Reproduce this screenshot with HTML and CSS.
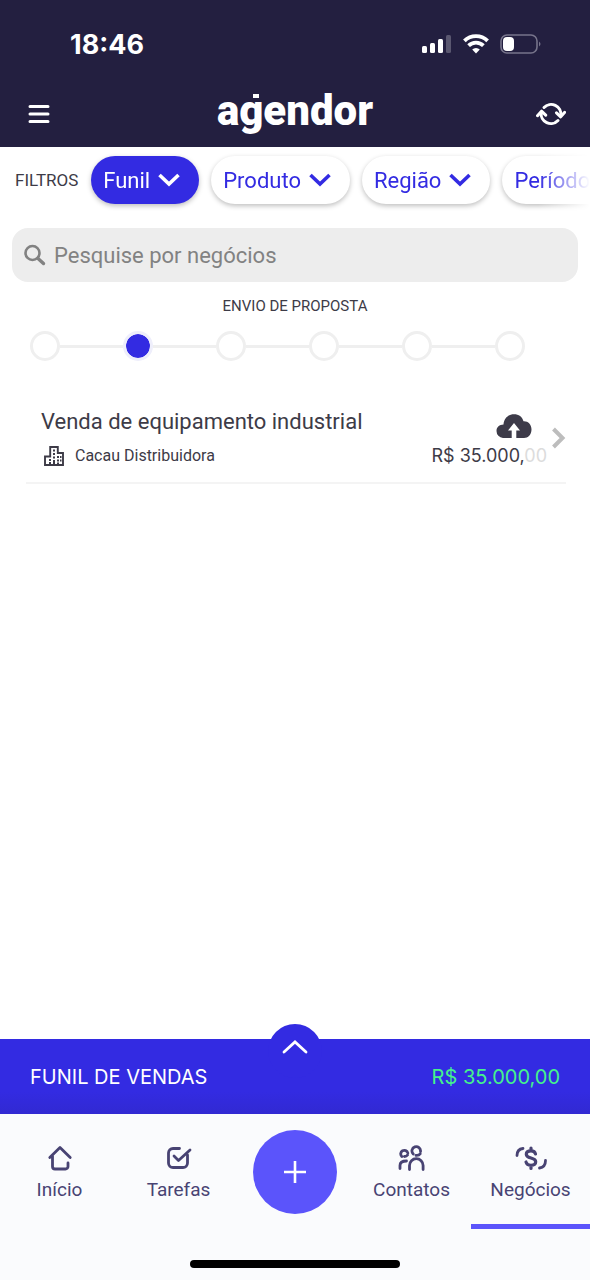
FILE: index.html
```html
<!DOCTYPE html>
<html lang="pt-BR">
<head>
<meta charset="utf-8">
<meta name="viewport" content="width=device-width, initial-scale=1">
<title>Agendor</title>
<link rel="stylesheet" href="styles.css">
</head>
<body>
<div class="app">
  <header class="header">
    <div class="status">
      <span class="time">18:46</span>
      <div class="indicators">
        <svg width="30" height="20" viewBox="0 0 30 20" fill="#fff"><rect x="0" y="12" width="5" height="7" rx="1.5"/><rect x="8" y="9" width="5" height="10" rx="1.5"/><rect x="16" y="5" width="5" height="14" rx="1.5"/><rect x="24" y="1" width="5" height="18" rx="1.5" opacity=".25"/></svg>
        <svg width="26" height="20" viewBox="0 0 26 20" fill="none" stroke="#fff" stroke-width="3.8"><path d="M1.400 6.800a16.500 16.500 0 0 1 23.200 0"/><path d="M5.600 11.600a10.500 10.500 0 0 1 14.800 0"/><path d="M13 19.400l-3.800-3.800a5.400 5.400 0 0 1 7.600 0z" fill="#fff" stroke="none"/></svg>
        <svg width="42" height="20" viewBox="0 0 42 20"><rect x="1" y="1" width="36" height="18" rx="6" fill="none" stroke="#77748b" stroke-width="1.6"/><rect x="3" y="3" width="11" height="14" rx="4" fill="#fff"/><path d="M39 7.500q3 2.500 0 5z" fill="#77748b"/></svg>
      </div>
    </div>
    <div class="topbar">
      <button class="icon-btn" aria-label="Menu"><svg width="22" height="20" viewBox="0 0 22 20" stroke="#fff" stroke-width="3" stroke-linecap="round"><path d="M2 2.500h18M2 10h18M2 17.500h18"/></svg></button>
      <h1 class="logo">agendor</h1>
      <button class="icon-btn" aria-label="Sincronizar"><svg width="30" height="24" viewBox="0 0 30 24" fill="none" stroke="#fff" stroke-width="3" stroke-linecap="round" stroke-linejoin="round"><path d="M8 5.500A9.800 9.800 0 0 1 24.800 13.500"/><path d="M20.500 10.800l4.200 4 4-4.500"/><path d="M22 18.500A9.800 9.800 0 0 1 5.200 10.500"/><path d="M1.500 13.700l4-4.500 4.200 4"/></svg></button>
    </div>
  </header>

  <main class="content">
    <div class="filters">
      <span class="filters-label">FILTROS</span>
      <div class="chips">
        <button class="chip chip-active">Funil <svg class="caret" width="22" height="14" viewBox="0 0 22 14"><path d="M1.500 2l9.500 9 9.500-9"/></svg></button>
        <button class="chip">Produto <svg class="caret" width="22" height="14" viewBox="0 0 22 14"><path d="M1.500 2l9.500 9 9.500-9"/></svg></button>
        <button class="chip">Região <svg class="caret" width="22" height="14" viewBox="0 0 22 14"><path d="M1.500 2l9.500 9 9.500-9"/></svg></button>
        <button class="chip">Período <svg class="caret" width="22" height="14" viewBox="0 0 22 14"><path d="M1.500 2l9.500 9 9.500-9"/></svg></button>
      </div>
    </div>

    <label class="search">
      <svg width="22" height="22" viewBox="0 0 22 22" fill="none" stroke="#828282" stroke-linecap="round"><circle cx="8.500" cy="9" r="7" stroke-width="2.600"/><path d="M14 14.500l5.500 5" stroke-width="3.400"/></svg>
      <input class="search-input" type="text" placeholder="Pesquise por negócios" aria-label="Pesquise por negócios">
    </label>

    <h2 class="stage-name">ENVIO DE PROPOSTA</h2>
    <div class="stages">
      <button class="stage" aria-label="Etapa 1"></button><span class="stage-line"></span>
      <button class="stage stage-active" aria-label="Etapa 2"></button><span class="stage-line"></span>
      <button class="stage" aria-label="Etapa 3"></button><span class="stage-line"></span>
      <button class="stage" aria-label="Etapa 4"></button><span class="stage-line"></span>
      <button class="stage" aria-label="Etapa 5"></button><span class="stage-line"></span>
      <button class="stage" aria-label="Etapa 6"></button>
    </div>

    <a class="deal" href="#">
      <div class="deal-info">
        <span class="deal-title">Venda de equipamento industrial</span>
        <span class="deal-company">
          <svg width="20" height="20" viewBox="0 0 20 20"><path d="M1 19V10.500h5.200V1h7.600v6H19v12z" fill="none" stroke="#3d3b47" stroke-width="1.900"/><path d="M9 3.500h2v2H9zM9 7h2v2H9zM9 10.500h2v2H9zM9 14h2v4.500H9zM5 13h2v2H5zM5 16h2v2H5zM13 10h2v2h-2zM13 13.500h2v2h-2zM16 10h1.500v2H16zM16 13.500h1.500v2H16zM13 16.500h2V18h-2z" fill="#3d3b47"/></svg>
          Cacau Distribuidora
        </span>
      </div>
      <div class="deal-side">
        <svg class="cloud" width="36" height="24" viewBox="0 0 36 24"><path d="M7 24A7 7 0 0 1 .500 17C.500 13 3.500 10.700 7.500 10.500 8 4 12.500.300 18 .300c4.700 0 8.300 2.500 9.500 7C32 7 35.500 10.500 35.500 15.500S32 24 28 24z" fill="#3d3b49"/><path d="M18 9l6 7.500h-3.700V24h-4.600v-7.500H12z" fill="#fff"/></svg>
        <span class="deal-value">R$ 35.000,<span class="cents">00</span></span>
      </div>
      <svg width="14" height="22" viewBox="0 0 14 22" fill="none" stroke="#bdbdbd" stroke-width="4"><path d="M1.500 2l9 9-9 9"/></svg>
    </a>
  </main>

  <section class="total">
    <button class="expand" aria-label="Expandir"><svg width="26" height="14" viewBox="0 0 26 14" fill="none" stroke="#fff" stroke-width="2.800" stroke-linecap="round" stroke-linejoin="miter"><path d="M2 12L13 2l11 10"/></svg></button>
    <span>FUNIL DE VENDAS</span>
    <span class="total-value">R$ 35.000,00</span>
  </section>

  <footer class="footer">
    <nav class="tabs">
      <a class="tab" href="#"><svg class="tab-icon" width="26" height="26" viewBox="0 0 26 26"><path d="M2.800 12.500L13 2.500l10.200 10M5.500 11v10.500a2.500 2.500 0 0 0 2.500 2.500h10.500a2.500 2.500 0 0 0 2.500-2.500V18"/></svg>Início</a>
      <a class="tab" href="#"><svg class="tab-icon" width="26" height="26" viewBox="0 0 26 26"><path d="M13.500 3.500H7A4.500 4.500 0 0 0 2.500 8v10A4.500 4.500 0 0 0 7 22.500h10a4.500 4.500 0 0 0 4.500-4.500V10"/><path d="M8 11l4.500 4.500L24 5"/></svg>Tarefas</a>
      <button class="add" aria-label="Adicionar"><svg width="24" height="24" viewBox="0 0 24 24" stroke="#fff" stroke-width="2.600"><path d="M12 1v22M1 12h22"/></svg></button>
      <a class="tab" href="#"><svg class="tab-icon" width="28" height="26" viewBox="0 0 28 26"><path d="M3.800 11.500A3.600 3.600 0 1 1 9.800 8M6.500 11.500q2 0 3-1.500M15.200 9A4.300 4.300 0 1 1 22.500 6.500M18 10.300q3 .300 4.200-1.500M2 23.500v-3c0-3 2-4.500 6.500-4.500M11.500 24.500v-4a6.800 6.800 0 0 1 13.600 0v4"/></svg>Contatos</a>
      <a class="tab tab-active" href="#"><svg class="tab-icon" width="32" height="26" viewBox="0 0 32 26"><path d="M2 10.500c0-4.500 2-6.500 6-7M30.500 15.500c0 4.500-2 7-6 7.500"/><path d="M20.500 9c-.500-2.300-2-3.200-4.500-3.200-3 0-4.700 1.300-4.700 3.500 0 5 9.400 2.500 9.400 7.500 0 2.200-2 3.500-4.700 3.500-2.800 0-4.500-1.200-5-3.300M16 3v3M16 20.500v3" stroke-width="3.200"/></svg>Negócios</a>
    </nav>
    <div class="home-indicator"></div>
  </footer>
</div>
</body>
</html>
```
FILE: styles.css
```css
* { box-sizing: border-box; }

body {
  margin: 0;
  background: #fff;
  color: #3d3b47;
  font-family: Roboto, sans-serif;
}

button {
  border: 0;
  padding: 0;
  background: none;
  font: inherit;
  cursor: pointer;
}

a {
  color: inherit;
  text-decoration: none;
}

svg { display: block; flex: none; }

.app {
  display: flex;
  flex-direction: column;
  min-height: 100vh;
}

.header {
  background: #231f40;
  color: #fff;
}

.status {
  display: flex;
  justify-content: space-between;
  align-items: center;
  height: 88px;
  padding: 0 48px 0 70px;
}

.time {
  font-family: Inter, sans-serif;
  font-size: 27px;
  font-weight: 700;
}

.indicators {
  display: flex;
  align-items: center;
  gap: 11px;
}

.topbar {
  display: flex;
  justify-content: space-between;
  align-items: flex-start;
  height: 59px;
  padding: 0 24px;
}

.icon-btn {
  display: grid;
  place-items: center;
  width: 30px;
  height: 52px;
}

.logo {
  position: relative;
  margin: 0;
  font-size: 42px;
  font-weight: 900;
  line-height: 46px;
}

.logo::before {
  content: "";
  position: absolute;
  top: 6px;
  left: 36px;
  width: 6px;
  height: 4px;
  background: #fff;
}

.content { flex: 1; }

.filters {
  display: flex;
  align-items: center;
  padding-left: 15px;
}

.filters-label {
  padding-bottom: 3px;
  font-size: 17px;
}

.chips {
  display: flex;
  flex: 1;
  gap: 12px;
  min-width: 0;
  padding: 9px 0 12px 13px;
  overflow: hidden;
  mask-image: linear-gradient(to left, transparent 0, #000 52px);
}

.chip {
  display: flex;
  flex: none;
  align-items: center;
  gap: 8px;
  height: 48px;
  padding: 0 19px 0 12px;
  border-radius: 24px;
  background: #fff;
  box-shadow: 0 2px 5px rgba(0, 0, 0, .25);
  color: #332be2;
  font-size: 22px;
}

.chip-active {
  background: #332be2;
  color: #fff;
}

.caret {
  fill: none;
  stroke: currentColor;
  stroke-width: 3.6;
}

.search {
  display: flex;
  align-items: center;
  gap: 8px;
  height: 54px;
  margin: 12px 12px 0;
  padding: 0 12px;
  border-radius: 16px;
  background: #ededed;
}

.search-input {
  flex: 1;
  min-width: 0;
  border: 0;
  padding: 0;
  outline: 0;
  background: none;
  color: #3d3b47;
  font: inherit;
  font-size: 22px;
}

.search-input::placeholder { color: #828282; opacity: 1; }

.stage-name {
  margin: 14px 0 10px;
  font-size: 15px;
  font-weight: 400;
  line-height: 20px;
  text-align: center;
}

.stages {
  display: flex;
  align-items: center;
  padding: 5px 65px 0 30px;
}

.stage {
  width: 30px;
  height: 30px;
  border: 3px solid #efefef;
  border-radius: 50%;
  background: #fff;
}

.stage-active {
  border-color: #eeeefb;
  background: #332be2;
  background-clip: padding-box;
}

.stage-line {
  flex: 1;
  height: 3px;
  background: #efefef;
}

.deal {
  display: flex;
  align-items: center;
  justify-content: flex-end;
  gap: 5px;
  margin: 45px 24px 0 26px;
  padding-bottom: 13px;
  border-bottom: 2px solid #f4f4f4;
}

.deal-info {
  display: flex;
  flex: 1;
  flex-direction: column;
  gap: 6px;
  padding-left: 15px;
}

.deal-title {
  font-size: 22px;
  line-height: 30px;
}

.deal-company {
  display: flex;
  align-items: center;
  gap: 11px;
  padding-left: 3px;
  font-size: 16px;
  line-height: 26px;
}

.deal-side {
  display: flex;
  flex-direction: column;
  align-items: flex-end;
  gap: 5px;
  padding-top: 8px;
}

.cloud { margin-right: 15px; }

.deal-value {
  font-family: Inter, sans-serif;
  font-size: 18px;
  line-height: 26px;
}

.cents { color: #dcdcdc; }

.total {
  position: relative;
  display: flex;
  align-items: center;
  justify-content: space-between;
  height: 75px;
  padding: 0 30px;
  background: linear-gradient(#332be2 70%, #3129d2);
  color: #fff;
  font-family: Inter, sans-serif;
  font-size: 20px;
}

.expand {
  position: absolute;
  top: -15px;
  left: 50%;
  display: flex;
  justify-content: center;
  width: 54px;
  height: 54px;
  margin-left: -27px;
  padding-top: 16px;
  border-radius: 50%;
  background: #332be2;
}

.total-value { color: #45f28c; }

.footer {
  display: flex;
  flex-direction: column;
  align-items: center;
  padding-bottom: 12px;
  background: #fafbfd;
  color: #484373;
}

.tabs {
  display: grid;
  grid-template-columns: 1fr 1fr 114px 1fr 1fr;
  justify-items: center;
  width: 100%;
  height: 115px;
}

.tab {
  display: flex;
  flex-direction: column;
  align-items: center;
  gap: 7px;
  width: 100%;
  padding-top: 31px;
  border-bottom: 5px solid transparent;
  font-size: 19px;
  line-height: 24px;
}

.tab-active { border-bottom-color: #5b54fb; }

.tab-icon {
  fill: none;
  stroke: #484373;
  stroke-width: 2.8px;
  stroke-linecap: round;
  stroke-linejoin: round;
}

.add {
  display: grid;
  place-items: center;
  width: 84px;
  height: 84px;
  margin-top: 16px;
  border-radius: 50%;
  background: #5b54fb;
}

.home-indicator {
  width: 210px;
  height: 8px;
  margin-top: 31px;
  border-radius: 4px;
  background: #000;
}
```
